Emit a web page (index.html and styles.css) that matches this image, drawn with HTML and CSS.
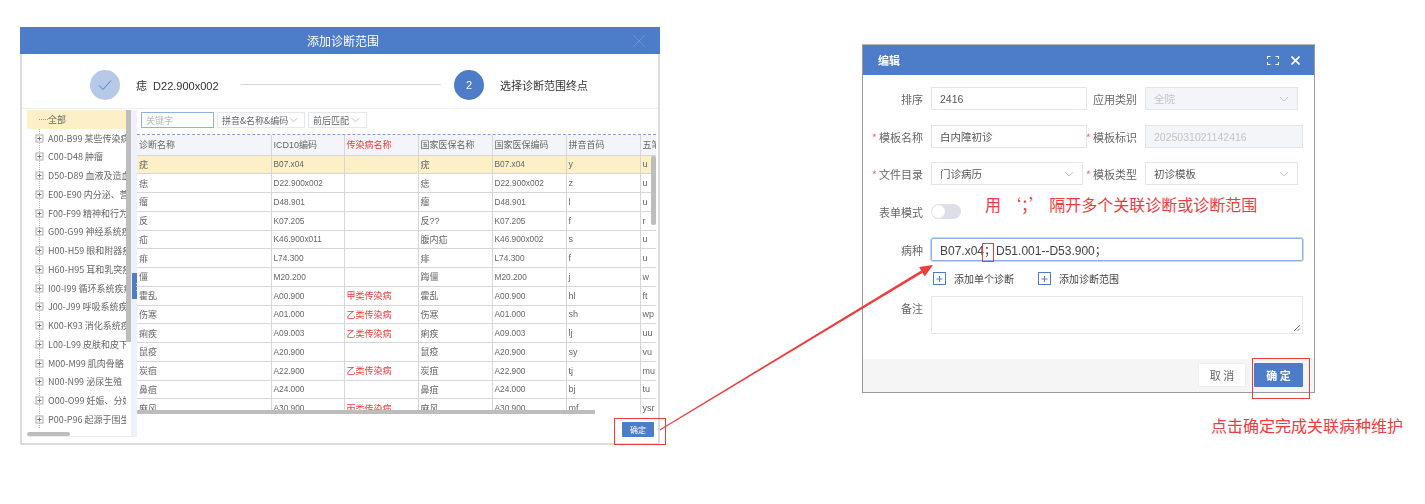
FILE: index.html
```html
<!DOCTYPE html>
<html lang="zh-CN">
<head>
<meta charset="utf-8">
<title>添加诊断范围</title>
<link rel="stylesheet" href="styles.css">
</head>
<body>
<svg class="defs" width="0" height="0" aria-hidden="true">
  <symbol id="chev" viewBox="0 0 10 6"><path d="M1 1l4 4 4-4" fill="none" stroke="currentColor" stroke-width="1"/></symbol>
  <symbol id="tplus" viewBox="0 0 9 9"><rect x="1" y="1" width="7" height="7" fill="#fff" stroke="#aaa"/><path d="M2.5 4.5h4M4.5 2.5v4" stroke="#777"/></symbol>
  <symbol id="addbox" viewBox="0 0 13 13"><rect x=".5" y=".5" width="12" height="12" fill="none" stroke="#4d7cc8"/><path d="M3.500 7h6M6.500 4v6" stroke="#4d7cc8"/></symbol>
</svg>
<main class="canvas">

  <section class="win win-add">
    <header class="add-head">
      <span>添加诊断范围</span>
      <svg class="add-close" width="12" height="12" viewBox="0 0 12 12"><path d="M0 0l12 12M12 0L0 12" stroke="#6d93d2" stroke-width="1"/></svg>
    </header>
    <div class="steps">
      <span class="circle done"><svg width="14" height="12" viewBox="0 0 14 12"><path d="M1 6.5l4 4L13 1.500" fill="none" stroke="#4d7cc8" stroke-width="1"/></svg></span>
      <span class="step-a">痣&nbsp; D22.900x002</span>
      <span class="step-line"></span>
      <span class="circle cur">2</span>
      <span class="step-b">选择诊断范围终点</span>
    </div>
    <div class="add-body">
      <aside class="tree">
        <div class="tree-list">
          <div class="tree-row tree-all"><span class="dash"></span>全部</div>
          <div class="tree-row"><svg class="tp"><use href="#tplus"/></svg>A00-B99 某些传染病</div>
          <div class="tree-row"><svg class="tp"><use href="#tplus"/></svg>C00-D48 肿瘤</div>
          <div class="tree-row"><svg class="tp"><use href="#tplus"/></svg>D50-D89 血液及造血</div>
          <div class="tree-row"><svg class="tp"><use href="#tplus"/></svg>E00-E90 内分泌、营</div>
          <div class="tree-row"><svg class="tp"><use href="#tplus"/></svg>F00-F99 精神和行为</div>
          <div class="tree-row"><svg class="tp"><use href="#tplus"/></svg>G00-G99 神经系统疾</div>
          <div class="tree-row"><svg class="tp"><use href="#tplus"/></svg>H00-H59 眼和附器疾</div>
          <div class="tree-row"><svg class="tp"><use href="#tplus"/></svg>H60-H95 耳和乳突疾</div>
          <div class="tree-row"><svg class="tp"><use href="#tplus"/></svg>I00-I99 循环系统疾病</div>
          <div class="tree-row"><svg class="tp"><use href="#tplus"/></svg>J00-J99 呼吸系统疾</div>
          <div class="tree-row"><svg class="tp"><use href="#tplus"/></svg>K00-K93 消化系统疾</div>
          <div class="tree-row"><svg class="tp"><use href="#tplus"/></svg>L00-L99 皮肤和皮下</div>
          <div class="tree-row"><svg class="tp"><use href="#tplus"/></svg>M00-M99 肌肉骨骼</div>
          <div class="tree-row"><svg class="tp"><use href="#tplus"/></svg>N00-N99 泌尿生殖</div>
          <div class="tree-row"><svg class="tp"><use href="#tplus"/></svg>O00-O99 妊娠、分娩</div>
          <div class="tree-row"><svg class="tp"><use href="#tplus"/></svg>P00-P96 起源于围生</div>
        </div>
        <span class="tree-vbar"></span>
        <span class="tree-hbar"></span>
      </aside>
      <div class="splitter"><span class="handle">⋮</span></div>
      <div class="main">
        <div class="tools">
          <span class="fld fld-key">关键字</span>
          <span class="fld fld-a">拼音&amp;名称&amp;编码<svg class="chev"><use href="#chev"/></svg></span>
          <span class="fld fld-b">前后匹配<svg class="chev"><use href="#chev"/></svg></span>
        </div>
        <div class="grid-wrap">
          <table class="grid">
            <colgroup><col class="c1"><col class="c2"><col class="c3"><col class="c4"><col class="c5"><col class="c6"><col class="c7"></colgroup>
            <thead><tr><th>诊断名称</th><th>ICD10编码</th><th class="red">传染病名称</th><th>国家医保名称</th><th>国家医保编码</th><th>拼音首码</th><th>五笔</th></tr></thead>
            <tbody>
              <tr class="sel"><td>疣</td><td>B07.x04</td><td></td><td>疣</td><td>B07.x04</td><td>y</td><td>u</td></tr>
              <tr><td>痣</td><td>D22.900x002</td><td></td><td>痣</td><td>D22.900x002</td><td>z</td><td>u</td></tr>
              <tr><td>瘤</td><td>D48.901</td><td></td><td>瘤</td><td>D48.901</td><td>l</td><td>u</td></tr>
              <tr><td>反</td><td>K07.205</td><td></td><td>反??</td><td>K07.205</td><td>f</td><td>r</td></tr>
              <tr><td>疝</td><td>K46.900x011</td><td></td><td>腹内疝</td><td>K46.900x002</td><td>s</td><td>u</td></tr>
              <tr><td>痱</td><td>L74.300</td><td></td><td>痱</td><td>L74.300</td><td>f</td><td>u</td></tr>
              <tr><td>僵</td><td>M20.200</td><td></td><td>踇僵</td><td>M20.200</td><td>j</td><td>w</td></tr>
              <tr><td>霍乱</td><td>A00.900</td><td class="red">甲类传染病</td><td>霍乱</td><td>A00.900</td><td>hl</td><td>ft</td></tr>
              <tr><td>伤寒</td><td>A01.000</td><td class="red">乙类传染病</td><td>伤寒</td><td>A01.000</td><td>sh</td><td>wp</td></tr>
              <tr><td>痢疾</td><td>A09.003</td><td class="red">乙类传染病</td><td>痢疾</td><td>A09.003</td><td>lj</td><td>uu</td></tr>
              <tr><td>鼠疫</td><td>A20.900</td><td></td><td>鼠疫</td><td>A20.900</td><td>sy</td><td>vu</td></tr>
              <tr><td>炭疽</td><td>A22.900</td><td class="red">乙类传染病</td><td>炭疽</td><td>A22.900</td><td>tj</td><td>mu</td></tr>
              <tr><td>鼻疽</td><td>A24.000</td><td></td><td>鼻疽</td><td>A24.000</td><td>bj</td><td>tu</td></tr>
              <tr><td>麻风</td><td>A30.900</td><td class="red">丙类传染病</td><td>麻风</td><td>A30.900</td><td>mf</td><td>ysr</td></tr>
            </tbody>
          </table>
          <span class="grid-vbar"></span>
          <span class="grid-hbar"></span>
        </div>
        <div class="add-foot"><button class="btn-small" type="button">确定</button></div>
      </div>
    </div>
  </section>

  <section class="win win-edit">
    <header class="edit-head">
      <span>编辑</span>
      <span class="edit-icons">
        <svg width="12" height="9" viewBox="0 0 12 9"><path d="M.5 3V.5h3M8.500 .5h3V3M11.500 6v2.500h-3M3.500 8.500h-3V6" fill="none" stroke="#fff" stroke-width="1.200"/></svg>
        <svg width="9" height="9" viewBox="0 0 9 9"><path d="M.5 .5l8 8M8.500 .5l-8 8" stroke="#fff" stroke-width="1.600"/></svg>
      </span>
    </header>
    <div class="form">
      <div class="row r1">
        <label class="lab">排序</label><span class="ctl w156">2416</span>
        <label class="lab lab2">应用类别</label><span class="ctl dis w153">全院<svg class="chev"><use href="#chev"/></svg></span>
      </div>
      <div class="row r2">
        <label class="lab"><i>*</i>模板名称</label><span class="ctl w156">白内障初诊</span>
        <label class="lab lab2"><i>*</i>模板标识</label><span class="ctl dis w158">2025031021142416</span>
      </div>
      <div class="row r3">
        <label class="lab"><i>*</i>文件目录</label><span class="ctl w152">门诊病历<svg class="chev"><use href="#chev"/></svg></span>
        <label class="lab lab2 lab2b"><i>*</i>模板类型</label><span class="ctl w153">初诊模板<svg class="chev"><use href="#chev"/></svg></span>
      </div>
      <div class="row r4">
        <label class="lab">表单模式</label><span class="switch"><span class="knob"></span></span>
      </div>
      <div class="row r5">
        <label class="lab">病种</label><span class="ctl focus">B07.x04；D51.001--D53.900；</span>
      </div>
      <div class="adds">
        <span class="add-link"><svg width="13" height="13"><use href="#addbox"/></svg>添加单个诊断</span>
        <span class="add-link"><svg width="13" height="13"><use href="#addbox"/></svg>添加诊断范围</span>
      </div>
      <div class="row r6">
        <label class="lab">备注</label>
        <span class="area"><svg class="grip" width="8" height="8" viewBox="0 0 8 8"><path d="M1 7l6-6M4.500 7L7 4.500" stroke="#777"/></svg></span>
      </div>
    </div>
    <footer class="edit-foot">
      <button class="btn cancel" type="button">取 消</button>
      <button class="btn ok" type="button">确 定</button>
    </footer>
  </section>

  <p class="note note-a">用 ‘；’ 隔开多个关联诊断或诊断范围</p>
  <p class="note note-b">点击确定完成关联病种维护</p>
  <span class="mark mark-a"></span>
  <span class="mark mark-b"></span>
  <span class="mark mark-c"></span>
  <svg class="arrow" width="290" height="180" viewBox="0 0 290 180">
    <path d="M2 167.500L264.600 9.800L263.200 7.600L1.500 166.500Z" fill="#ee3b3b"/>
    <path d="M275 2L261.100 4L266.700 13.400Z" fill="#ee3b3b"/>
  </svg>
</main>
</body>
</html>
```
FILE: styles.css
```css
* { box-sizing: border-box; }
html, body { margin: 0; padding: 0; background: #fff; }
body { font-family: "Noto Sans CJK SC", "Liberation Sans", sans-serif; color: #606266; overflow: hidden; }
.defs { position: absolute; }
.canvas { position: relative; width: 1425px; height: 504px; overflow: hidden; }
.win { position: absolute; background: #fff; display: flex; flex-direction: column; filter: blur(.35px); }

/* left dialog */
.win-add { left: 20px; top: 27px; width: 640px; height: 418px; border: 1px solid #dcdcdc; border-width: 0 2px 2px 2px; filter: blur(.45px); }
.add-head { height: 27px; flex: none; background: #4d7cc8; color: #fff; font-size: 12px; display: flex; align-items: center; justify-content: center; position: relative; margin: 0 -2px; padding-left: 6px; }
.add-close { position: absolute; right: 15px; top: 8px; }
.steps { height: 55px; flex: none; display: flex; align-items: center; font-size: 11px; color: #333; padding: 7px 0 0 68px; border-bottom: 1px solid #f0f0f0; }
.circle { width: 30px; height: 30px; border-radius: 50%; display: flex; align-items: center; justify-content: center; flex: none; }
.done { background: #b7c9e9; }
.cur { background: #4d7cc8; color: #fff; font-family: "Liberation Sans", sans-serif; font-size: 11px; margin-left: 13px; }
.step-a { margin-left: 16px; width: 105px; font-family: "Liberation Sans", "Noto Sans CJK SC", sans-serif; }
.step-line { width: 200px; height: 1px; background: #d5d5d5; }
.step-b { margin-left: 16px; }
.add-body { flex: 1; min-height: 0; display: flex; padding: 1px 2px 6px 5px; }
.tree { width: 104px; flex: none; position: relative; overflow: hidden; border-bottom: 1px solid #eee; }
.tree::before { content: ""; position: absolute; left: 12px; top: 9px; bottom: 8px; border-left: 1px dotted #bbb; }
.tree-list { width: 99px; overflow: hidden; position: relative; }
.tree-row { height: 18.750px; display: flex; align-items: center; font-size: 9px; white-space: nowrap; color: #666; padding-left: 8px; }
.tree-all { background: #fdf0c6; padding-left: 12px; }
.dash { width: 9px; flex: none; border-top: 1px dotted #999; }
.tp { width: 9px; height: 9px; margin-right: 4px; flex: none; }
.tree-vbar { position: absolute; left: 99px; top: 0; width: 5px; height: 232px; background: #bdbdbd; }
.tree-hbar { position: absolute; left: 0; bottom: 0; width: 43px; height: 4px; border-radius: 2px; background: #bdbdbd; }
.splitter { width: 6px; flex: none; background: #eef1fa; position: relative; }
.handle { position: absolute; left: 1px; top: 163px; width: 5px; height: 26px; background: #4d7cc8; color: #fff; font-size: 10px; line-height: 26px; text-align: center; }
.main { flex: 1; min-width: 0; display: flex; flex-direction: column; }
.tools { height: 25px; flex: none; display: flex; gap: 3px; padding: 2px 0 0 4px; font-size: 9px; border-bottom: 1px dashed #7f9fd8; }
.fld { height: 16px; border: 1px solid #e4e7ed; display: flex; align-items: center; padding-left: 4px; position: relative; color: #666; }
.fld-key { width: 73px; border-color: #8fb0e4; color: #bbb; }
.fld-a { width: 88px; }
.fld-b { width: 59px; }
.chev { width: 9px; height: 6px; color: #bbb; position: absolute; right: 6px; top: 50%; margin-top: -3px; }
.grid-wrap { height: 279px; flex: none; position: relative; overflow: hidden; }
.grid { border-collapse: collapse; table-layout: fixed; width: 519px; font-size: 9px; font-family: "Liberation Sans", "Noto Sans CJK SC", sans-serif; }
.c1 { width: 134px; } .c2 { width: 73px; } .c3, .c4, .c5, .c6 { width: 74px; } .c7 { width: 16px; }
.grid th { height: 20px; background: #f3f5fa; font-weight: normal; text-align: left; padding: 0 2px; border: 1px solid #d6d6d6; border-width: 0 1px 1px 0; white-space: nowrap; overflow: hidden; color: #666; }
.grid td { height: 18.750px; padding: 0 2px; border: 1px solid #d6d6d6; border-width: 0 1px 1px 0; white-space: nowrap; overflow: hidden; color: #666; }
.grid td:nth-child(2), .grid td:nth-child(5) { font-size: 8.300px; }
.grid .red { color: #f03a3a; }
.sel td { background: #fdf0c6; }
.grid-vbar { position: absolute; right: 0; top: 21px; width: 5px; height: 69px; border-radius: 2px; background: #bdbdbd; }
.grid-hbar { position: absolute; left: 0; bottom: 0; width: 458px; height: 4px; background: #bdbdbd; }
.add-foot { flex: 1; display: flex; justify-content: flex-end; padding: 8px 2px 0 0; }
.btn-small { width: 32px; height: 15px; padding: 0; border: 0; border-radius: 1px; background: #4d7cc8; color: #fff; font: 8px "Noto Sans CJK SC", sans-serif; }

/* right dialog */
.win-edit { left: 862px; top: 44px; width: 453px; height: 349px; border: 1px solid #999; border-top-color: #bbb; }
.edit-head { height: 30px; flex: none; background: #4d7cc8; color: #fff; font-size: 11px; font-weight: 700; display: flex; align-items: center; justify-content: space-between; padding: 0 14px 0 15px; }
.edit-icons { display: flex; align-items: center; gap: 12px; }
.form { flex: 1; min-height: 0; font-size: 11px; }
.row { display: flex; align-items: center; }
.r1 { margin-top: 12px; }
.r2 { margin-top: 15px; }
.r3 { margin-top: 14px; }
.r4 { margin-top: 19px; height: 15px; }
.r5 { margin-top: 19px; }
.r6 { margin-top: 11px; align-items: flex-start; }
.lab { width: 60px; flex: none; display: flex; justify-content: flex-end; color: #666; white-space: nowrap; line-height: 16px; }
.lab i { color: #f56c6c; font-style: normal; margin-right: 2px; }
.lab2 { width: 50px; }
.lab2b { margin-left: 4px; }
.row > .ctl, .switch, .area { margin-left: 8px; }
.ctl { height: 23px; flex: none; position: relative; border: 1px solid #e2e5ec; display: flex; align-items: center; padding-left: 8px; color: #555; font-size: 10.500px; font-family: "Liberation Sans", "Noto Sans CJK SC", sans-serif; }
.ctl .chev { color: #c0c4cc; width: 10px; right: 8px; }
.w156 { width: 156px; } .w152 { width: 152px; } .w153 { width: 153px; } .w158 { width: 158px; }
.dis { background: #f3f5f8; color: #c0c4cc; }
.ctl.focus { width: 372px; border-color: #8fb0e4; box-shadow: 0 0 0 .5px #8fb0e4; border-radius: 2px; font-size: 12px; color: #444; }
.switch { width: 30px; height: 15px; border-radius: 8px; background: #dcdfe6; position: relative; }
.knob { position: absolute; left: 1px; top: 1px; width: 13px; height: 13px; border-radius: 50%; background: #fff; }
.adds { display: flex; gap: 24px; margin: 11px 0 0 70px; height: 13px; font-size: 10px; color: #444; }
.add-link { display: flex; align-items: center; gap: 8px; }
.area { width: 372px; height: 38px; border: 1px solid #e8e8e8; position: relative; }
.grip { position: absolute; right: 1px; bottom: 1px; }
.r6 .lab { padding-top: 4px; }
.edit-foot { height: 33px; flex: none; background: #f5f5f5; display: flex; justify-content: flex-end; gap: 8px; padding: 4px 11px 0 0; }
.btn { height: 24px; width: 48px; padding: 0; border: 1px solid #eee; border-radius: 1px; font: 11px "Noto Sans CJK SC", sans-serif; }
.cancel { background: #fff; color: #666; }
.ok { width: 49px; background: #4d7cc8; border-color: #4d7cc8; color: #fff; font-weight: 700; }

/* annotations */
.note { position: absolute; margin: 0; color: #ee3b3b; white-space: nowrap; }
.note-a { left: 985px; top: 193px; font-size: 16px; line-height: 22px; word-spacing: .5px; }
.note-b { left: 1211px; top: 414px; font-size: 16px; line-height: 22px; }
.mark { position: absolute; border: 1px solid #ee3b3b; }
.mark-a { left: 614px; top: 418px; width: 52px; height: 27px; }
.mark-b { left: 982px; top: 243px; width: 12px; height: 19px; }
.mark-c { left: 1252px; top: 358px; width: 58px; height: 41px; }
.arrow { position: absolute; left: 658px; top: 263px; }
```
